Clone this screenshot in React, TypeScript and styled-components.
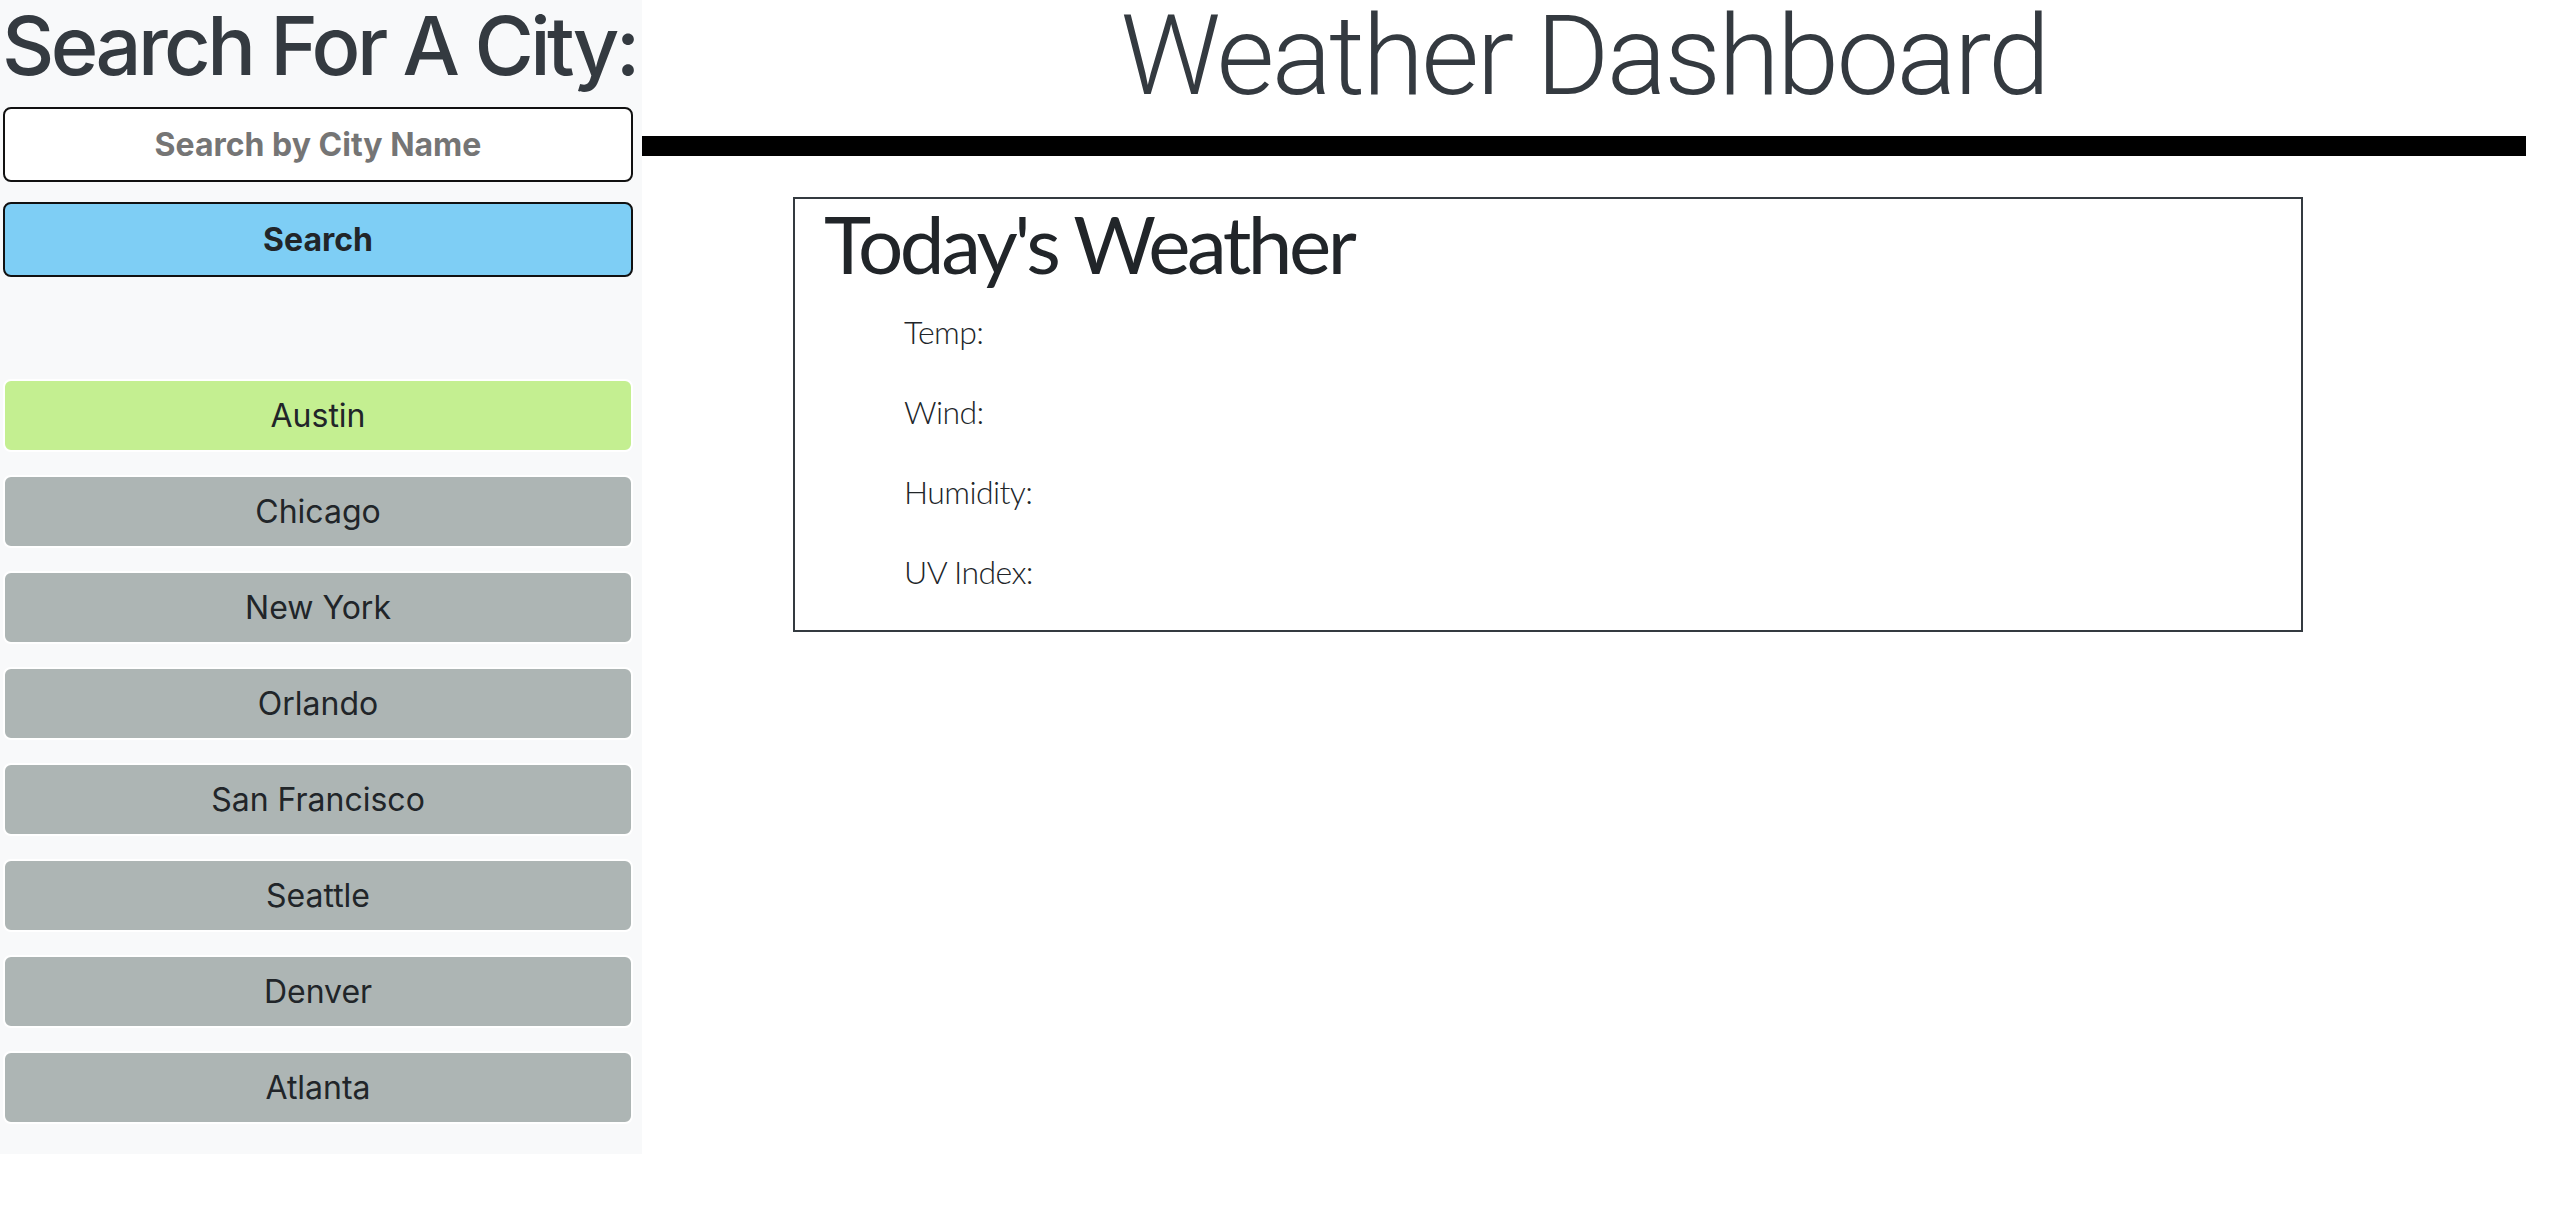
import * as React from "react"
import styled, {createGlobalStyle} from "styled-components";

const cities = [
  'Austin',
  'Chicago',
  'New York',
  'Orlando',
  'San Francisco',
  'Seattle',
  'Denver',
  'Atlanta'
]

const details = ['Temp:', 'Wind:', 'Humidity:', 'UV Index:']

const App = () => {
  const [active, setActive] = React.useState('Austin')

  return (
    <>
      <GlobalStyle />
      <Page>
        <Sidebar>
          <SideTitle>Search For A City:</SideTitle>
          <SearchInput placeholder="Search by City Name" />
          <SearchButton>Search</SearchButton>
          <CityList>
            {cities.map(city => (
              <CityButton key={city} active={city === active} onClick={() => setActive(city)}>
                {city}
              </CityButton>
            ))}
          </CityList>
        </Sidebar>
        <Main>
          <PageTitle>Weather Dashboard</PageTitle>
          <Rule />
          <TodayCard>
            <CardTitle>Today's Weather</CardTitle>
            <DetailList>
              {details.map(label => <Detail key={label}>{label}</Detail>)}
            </DetailList>
          </TodayCard>
        </Main>
      </Page>
    </>
  )
}

const GlobalStyle = createGlobalStyle`
  html, body {
    margin: 0;
    padding: 0;
    background: #fff;
    font-family: Inter, 'Liberation Sans', sans-serif;
  }
  * {
    box-sizing: border-box;
  }
`
const Page = styled.div`
  display: flex;
  align-items: flex-start;
  width: 100%;
`
const Sidebar = styled.aside`
  width: 642px;
  flex-shrink: 0;
  background: #f8f9fa;
  padding: 0 9px 30px 3px;
  display: flex;
  flex-direction: column;
`
const SideTitle = styled.h1`
  margin: -4px 0 0 -1px;
  font: normal normal 500 81px/100px Inter, 'Liberation Sans', sans-serif;
  letter-spacing: -3.6px;
  color: #343a40;
  white-space: nowrap;
`
const SearchInput = styled.input`
  margin-top: 11px;
  height: 75px;
  width: 100%;
  border: 2px solid #111;
  border-radius: 8px;
  background: #fff;
  text-align: center;
  font: normal normal 700 32px Inter, 'Liberation Sans', sans-serif;
  color: #212529;
  outline: none;

  &::placeholder {
    color: #757575;
  }
`
const SearchButton = styled.button`
  margin-top: 20px;
  height: 75px;
  width: 100%;
  border: 2px solid #111;
  border-radius: 8px;
  background: #7ecef5;
  font: normal normal 700 32px Inter, 'Liberation Sans', sans-serif;
  color: #212529;
  cursor: pointer;
`
const CityList = styled.div`
  margin-top: 102px;
  display: flex;
  flex-direction: column;
  gap: 23px;
`
const CityButton = styled.button<{active?: boolean}>`
  height: 73px;
  width: 100%;
  border: 2px solid #fff;
  border-radius: 8px;
  background: ${props => props.active ? '#c4ef91' : '#adb5b4'};
  font: normal normal 400 32px Inter, 'Liberation Sans', sans-serif;
  color: #212529;
  cursor: pointer;
`
const Main = styled.main`
  flex: 1;
  padding-right: 28px;
  display: flex;
  flex-direction: column;
`
const PageTitle = styled.h1`
  margin: -11px 0 0;
  text-align: center;
  font: normal normal 300 112px/134px Roboto, 'Liberation Sans', sans-serif;
  letter-spacing: -2.7px;
  color: #343a40;
`
const Rule = styled.div`
  margin-top: 13px;
  height: 20px;
  background: #000;
`
const TodayCard = styled.section`
  margin: 41px 0 0 151px;
  width: 1510px;
  border: 2px solid #343a40;
  padding: 4px 29px 34px;
`
const CardTitle = styled.h2`
  margin: 0;
  font: normal normal 400 80px/80px Lato, 'Liberation Sans', sans-serif;
  letter-spacing: -3.5px;
  color: #212529;
`
const DetailList = styled.ul`
  list-style: none;
  margin: 25px 0 0;
  padding: 0 0 0 80px;
  display: flex;
  flex-direction: column;
  gap: 32px;
`
const Detail = styled.li`
  font: normal normal 300 32px/48px Lato, 'Liberation Sans', sans-serif;
  letter-spacing: -0.6px;
  color: #212529;
`

export default App
